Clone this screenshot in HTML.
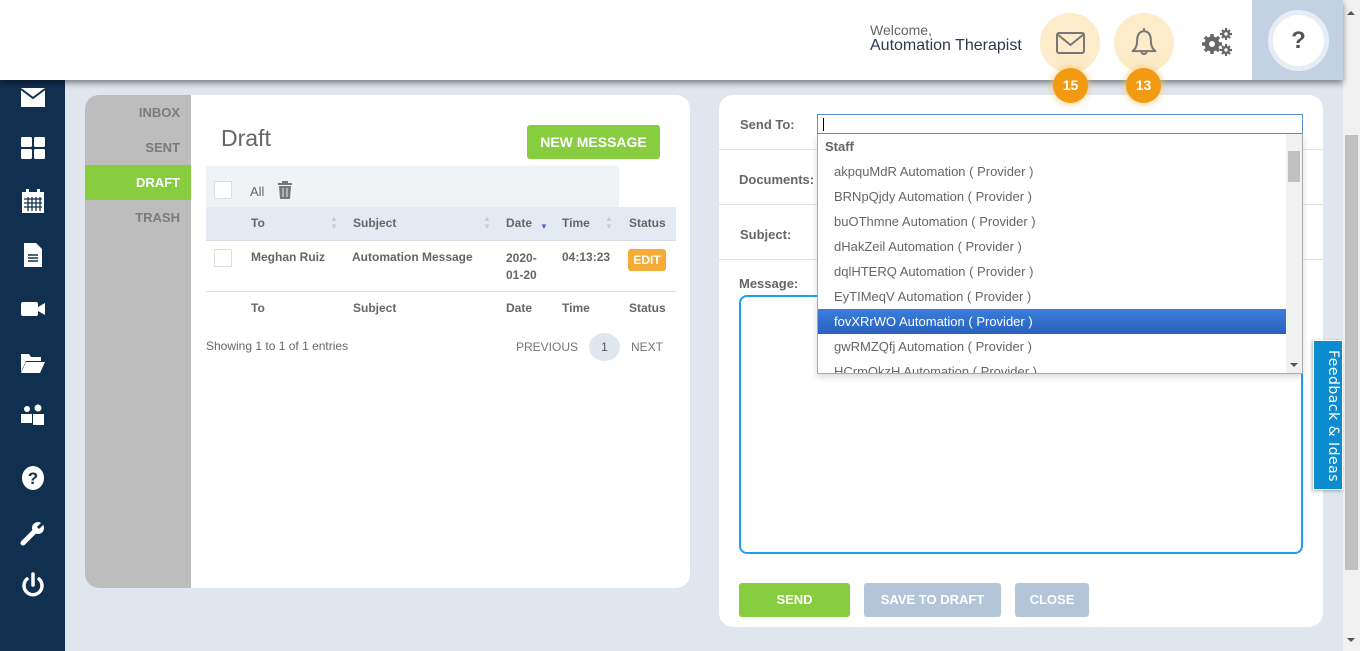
<!DOCTYPE html>
<html><head><meta charset="utf-8"><style>
*{box-sizing:border-box;margin:0;padding:0}
body{width:1360px;height:651px;overflow:hidden;background:#dfe6ee;font-family:"Liberation Sans",Arial,sans-serif;position:relative}
.abs{position:absolute}
#hdr{left:0;top:0;width:1343px;height:80px;background:#fff;box-shadow:0 3px 6px rgba(0,0,0,.45);z-index:5}
#side{left:0;top:80px;width:65px;height:571px;background:#11304f}
.si{position:absolute;left:20px;width:26px;height:26px}
.lp{left:85px;top:95px;width:605px;height:493px;background:#fff;border-radius:14px;overflow:hidden}
.gcol{left:0;top:0;width:106px;height:493px;background:#bdbdbd}
.tab{position:absolute;right:10px;font-size:13px;font-weight:bold;color:#7b7b7b}
.th{font-size:12px;font-weight:bold;color:#666}
.rp{left:719px;top:95px;width:604px;height:532px;background:#fff;border-radius:14px}
.lbl{font-size:13px;font-weight:bold;color:#666}
.hr{height:1px;background:#e3e3e3}
.btn{position:absolute;color:#fff;font-weight:bold;font-size:13px;text-align:center;border-radius:3px}
.opt{position:absolute;left:16px;font-size:13px;color:#666}
</style></head><body>
<div id="hdr" class="abs">
 <div class="abs" style="left:870px;top:22px;font-size:14px;color:#666">Welcome,</div>
 <div class="abs" style="left:870px;top:37px;font-size:16px;color:#2d3a4a">Automation Therapist</div>
 <div class="abs" style="left:1040px;top:13px;width:60px;height:60px;border-radius:50%;background:#fdebc9"></div>
 <svg class="abs" style="left:1056px;top:32px" width="29" height="22" viewBox="0 0 29 22"><rect x="1" y="1" width="27" height="20" rx="2" fill="none" stroke="#777" stroke-width="2"/><path d="M1 2 L14.5 13 L28 2" fill="none" stroke="#777" stroke-width="2"/></svg>
 <div class="abs" style="left:1114px;top:13px;width:60px;height:60px;border-radius:50%;background:#fdebc9"></div>
 <svg class="abs" style="left:1128px;top:26px" width="32" height="32" viewBox="0 0 28 28"><path d="M4 22 Q8 19 8 13 Q8 5 14 4.5 Q20 5 20 13 Q20 19 24 22 Z" fill="none" stroke="#777" stroke-width="1.8" stroke-linejoin="round"/><path d="M14 2v2.5M11.5 23 Q14 26 16.5 23" stroke="#777" stroke-width="1.8" fill="none"/></svg>
 <svg class="abs" style="left:1201px;top:27px" width="32" height="30" viewBox="0 0 32 30">
  <g fill="#666"><circle cx="11" cy="17" r="7.5"/>
   <g stroke="#666" stroke-width="3.5"><path d="M11 7v20M1 17h20M4 10l14 14M18 10L4 24"/></g></g>
  <circle cx="11" cy="17" r="3" fill="#fff"/>
  <g fill="#666"><circle cx="25" cy="7" r="4"/><path d="M25 1v12M19 7h12M21 3l8 8M29 3l-8 8" stroke="#666" stroke-width="2.2"/><circle cx="25" cy="23" r="4"/><path d="M25 17v12M19 23h12M21 19l8 8M29 19l-8 8" stroke="#666" stroke-width="2.2"/></g>
  <circle cx="25" cy="7" r="1.7" fill="#fff"/><circle cx="25" cy="23" r="1.7" fill="#fff"/>
 </svg>
 <div class="abs" style="left:1252px;top:0;width:91px;height:80px;background:#c2d2e2"></div>
 <div class="abs" style="left:1268px;top:10px;width:61px;height:61px;border-radius:50%;background:#fff;border:5px solid #e6edf4;text-align:center;line-height:51px;font-size:24px;font-weight:bold;color:#555">?</div>
</div>
<div class="abs" style="left:1053px;top:68px;width:35px;height:35px;border-radius:50%;background:#f29a12;box-shadow:0 0 8px #f6c26a;color:#fff;font-weight:bold;font-size:14px;text-align:center;line-height:35px;z-index:6">15</div>
<div class="abs" style="left:1126px;top:68px;width:35px;height:35px;border-radius:50%;background:#f29a12;box-shadow:0 0 8px #f6c26a;color:#fff;font-weight:bold;font-size:14px;text-align:center;line-height:35px;z-index:6">13</div>
<div class="abs" style="left:1343px;top:0;width:17px;height:651px;background:#f1f1f1"></div>
<div class="abs" style="left:1345px;top:135px;width:13px;height:435px;background:#c1c1c1"></div>
<div class="abs" style="left:1347px;top:7px;width:0;height:0;border:4px solid transparent;border-bottom-color:#555"></div>
<div class="abs" style="left:1347px;top:638px;width:0;height:0;border:4px solid transparent;border-top-color:#555"></div>

<div id="side" class="abs">
 <svg class="si" style="top:5px" viewBox="0 0 26 26"><path d="M1 3h24v19H1z" fill="#fff"/><path d="M1 4l12 9 12-9" stroke="#11304f" stroke-width="2" fill="none"/></svg>
 <svg class="si" style="top:55px" viewBox="0 0 26 26"><rect x="1" y="2" width="11" height="10" rx="1.5" fill="#fff"/><rect x="14" y="2" width="11" height="10" rx="1.5" fill="#fff"/><rect x="1" y="14" width="11" height="10" rx="1.5" fill="#fff"/><rect x="14" y="14" width="11" height="10" rx="1.5" fill="#fff"/></svg>
 <svg class="si" style="top:108px" viewBox="0 0 26 26"><rect x="2" y="4" width="22" height="21" fill="#fff"/><rect x="6" y="1" width="3" height="6" fill="#fff"/><rect x="17" y="1" width="3" height="6" fill="#fff"/><path d="M4 11h18M4 15h18M4 19h18M8 9v14M12 9v14M16 9v14M20 9v14" stroke="#11304f" stroke-width="1.3"/></svg>
 <svg class="si" style="top:162px" viewBox="0 0 26 26"><path d="M4 1h12l6 6v18H4z" fill="#fff"/><path d="M8 13h10M8 16h10M8 19h10" stroke="#11304f" stroke-width="1.5"/></svg>
 <svg class="si" style="top:216px" viewBox="0 0 26 26"><rect x="1" y="6" width="17" height="14" rx="2" fill="#fff"/><path d="M18 11l7-4v12l-7-4z" fill="#fff"/></svg>
 <svg class="si" style="top:270px" viewBox="0 0 26 26"><path d="M1 4h8l2 3h10v4H6L1 22z" fill="#fff"/><path d="M6 12h19l-5 11H1z" fill="#fff"/></svg>
 <svg class="si" style="top:324px" viewBox="0 0 26 26"><circle cx="7" cy="5" r="3" fill="#fff"/><circle cx="18" cy="4" r="3.5" fill="#fff"/><rect x="1" y="10" width="11" height="9" fill="#fff"/><rect x="13" y="10" width="11" height="11" fill="#fff"/></svg>
 <svg class="si" style="top:385px" viewBox="0 0 26 26"><ellipse cx="13" cy="13" rx="11" ry="12" fill="#fff"/><text x="13" y="19" font-size="17" font-weight="bold" text-anchor="middle" fill="#11304f" font-family="Liberation Sans">?</text></svg>
 <svg class="si" style="top:440px" viewBox="0 0 26 26"><path d="M3 23l11-11" stroke="#fff" stroke-width="5" stroke-linecap="round"/><circle cx="18" cy="8" r="6" fill="#fff"/><path d="M18 8l6-6" stroke="#11304f" stroke-width="3"/></svg>
 <svg class="si" style="top:492px" viewBox="0 0 26 26"><path d="M7 7a9 9 0 1 0 12 0" fill="none" stroke="#fff" stroke-width="3.5" stroke-linecap="round"/><path d="M13 2v11" stroke="#fff" stroke-width="3.5" stroke-linecap="round"/></svg>
</div>

<div class="abs lp">
 <div class="abs gcol"></div>
 <div class="tab" style="top:10px;right:510px;position:absolute">INBOX</div>
 <div class="tab" style="top:45px;right:510px">SENT</div>
 <div class="abs" style="left:0;top:70px;width:106px;height:35px;background:#88cc3f"></div>
 <div class="tab" style="top:80px;right:510px;color:#fff">DRAFT</div>
 <div class="tab" style="top:115px;right:510px">TRASH</div>
 <div class="abs" style="left:136px;top:30px;font-size:23px;color:#666">Draft</div>
 <div class="btn" style="left:442px;top:30px;width:133px;height:34px;line-height:34px;background:#88cc3f;font-size:14px">NEW MESSAGE</div>
 <div class="abs" style="left:121px;top:71px;width:413px;height:41px;background:#eff3f6"></div>
 <div class="abs" style="left:129px;top:86px;width:18px;height:18px;border:1px solid #ddd;background:#fff"></div>
 <div class="abs" style="left:165px;top:89px;font-size:13px;color:#666">All</div>
 <svg class="abs" style="left:192px;top:86px" width="16" height="18" viewBox="0 0 16 18"><rect x="1" y="2" width="14" height="2" fill="#777"/><rect x="5" y="0" width="6" height="2" fill="#777"/><path d="M2 5h12l-1 13H3z" fill="#777"/><path d="M6 7v9M10 7v9" stroke="#eee" stroke-width="1"/></svg>
 <div class="abs" style="left:121px;top:112px;width:470px;height:34px;background:#e3eaf1;border-bottom:1px solid #d6dde4"></div>
 <div class="abs th" style="left:166px;top:121px">To</div>
 <div class="abs th" style="left:268px;top:121px">Subject</div>
 <div class="abs th" style="left:421px;top:121px">Date</div>
 <div class="abs th" style="left:477px;top:121px">Time</div>
 <div class="abs th" style="left:544px;top:121px">Status</div>
 <div class="abs" style="left:245px;top:120px;font-size:8px;color:#ccc;line-height:8px">▲<br>▼</div>
 <div class="abs" style="left:398px;top:120px;font-size:8px;color:#ccc;line-height:8px">▲<br>▼</div>
 <div class="abs" style="left:520px;top:120px;font-size:8px;color:#ccc;line-height:8px">▲<br>▼</div>
 <div class="abs" style="left:455px;top:127px;font-size:8px;color:#5b5fd6">▼</div>
 <div class="abs" style="left:129px;top:154px;width:18px;height:18px;border:1px solid #ddd"></div>
 <div class="abs th" style="left:166px;top:155px">Meghan Ruiz</div>
 <div class="abs th" style="left:267px;top:155px">Automation Message</div>
 <div class="abs th" style="left:421px;top:155px;line-height:17px">2020-<br>01-20</div>
 <div class="abs th" style="left:477px;top:155px">04:13:23</div>
 <div class="btn" style="left:543px;top:154px;width:38px;height:22px;line-height:22px;background:#f5ab35;font-size:12px">EDIT</div>
 <div class="abs" style="left:121px;top:196px;width:470px;height:1px;background:#ddd"></div>
 <div class="abs th" style="left:166px;top:206px">To</div>
 <div class="abs th" style="left:268px;top:206px">Subject</div>
 <div class="abs th" style="left:421px;top:206px">Date</div>
 <div class="abs th" style="left:477px;top:206px">Time</div>
 <div class="abs th" style="left:544px;top:206px">Status</div>
 <div class="abs" style="left:121px;top:244px;font-size:12px;color:#666">Showing 1 to 1 of 1 entries</div>
 <div class="abs" style="left:431px;top:245px;font-size:12px;color:#777">PREVIOUS</div>
 <div class="abs" style="left:504px;top:238px;width:31px;height:28px;border-radius:50%;background:#dfe6ee;text-align:center;line-height:28px;font-size:12px;color:#555">1</div>
 <div class="abs" style="left:546px;top:245px;font-size:12px;color:#777">NEXT</div>
</div>

<div class="abs rp">
 <div class="abs lbl" style="left:21px;top:22px">Send To:</div>
 <div class="abs hr" style="left:0;top:54px;width:604px"></div>
 <div class="abs lbl" style="left:20px;top:77px">Documents:</div>
 <div class="abs hr" style="left:0;top:109px;width:604px"></div>
 <div class="abs lbl" style="left:21px;top:132px">Subject:</div>
 <div class="abs hr" style="left:0;top:164px;width:604px"></div>
 <div class="abs lbl" style="left:20px;top:181px">Message:</div>
 <div class="abs" style="left:20px;top:200px;width:564px;height:259px;border:2px solid #1ea0f0;border-radius:8px"></div>
 <div class="btn" style="left:20px;top:488px;width:111px;height:34px;line-height:34px;background:#88cc3f">SEND</div>
 <div class="btn" style="left:145px;top:488px;width:137px;height:34px;line-height:34px;background:#b3c5d9">SAVE TO DRAFT</div>
 <div class="btn" style="left:296px;top:488px;width:74px;height:34px;line-height:34px;background:#b3c5d9">CLOSE</div>
</div>

<div class="abs" style="left:817px;top:114px;width:486px;height:20px;border:1px solid #5a8fd9;background:#fff"><div class="abs" style="left:5px;top:3px;width:1px;height:13px;background:#000"></div></div>
<div class="abs" style="left:817px;top:134px;width:486px;height:240px;background:#fff;border:1px solid #aaa;border-top:none;box-shadow:0 3px 6px rgba(0,0,0,.15);overflow:hidden">
 <div class="abs" style="left:7px;top:5px;font-size:13px;font-weight:bold;color:#666">Staff</div>
 <div class="opt" style="top:30px">akpquMdR Automation ( Provider )</div>
 <div class="opt" style="top:55px">BRNpQjdy Automation ( Provider )</div>
 <div class="opt" style="top:80px">buOThmne Automation ( Provider )</div>
 <div class="opt" style="top:105px">dHakZeil Automation ( Provider )</div>
 <div class="opt" style="top:130px">dqlHTERQ Automation ( Provider )</div>
 <div class="opt" style="top:155px">EyTIMeqV Automation ( Provider )</div>
 <div class="abs" style="left:0;top:175px;width:468px;height:25px;background:linear-gradient(#3b7ddd,#2a62be)"></div>
 <div class="opt" style="top:180px;color:#fff">fovXRrWO Automation ( Provider )</div>
 <div class="opt" style="top:205px">gwRMZQfj Automation ( Provider )</div>
 <div class="opt" style="top:230px">HCrmQkzH Automation ( Provider )</div>
 <div class="abs" style="left:468px;top:0;width:17px;height:240px;background:#f1f1f1"></div>
 <div class="abs" style="left:470px;top:17px;width:12px;height:31px;background:#c1c1c1"></div>
 <div class="abs" style="left:472px;top:229px;border:4px solid transparent;border-top-color:#555"></div>
</div>
<div class="abs" style="left:1313px;top:340px;width:30px;height:150px;background:#0b8bd0;border:1px solid #fff;box-shadow:-1px 1px 3px rgba(0,0,0,.3)"><div class="abs" style="left:27px;top:9px;transform:rotate(90deg);transform-origin:0 0;white-space:nowrap;color:#fff;font-size:14px;letter-spacing:.5px;font-family:'DejaVu Sans',sans-serif">Feedback &amp; Ideas</div></div>
</body></html>
